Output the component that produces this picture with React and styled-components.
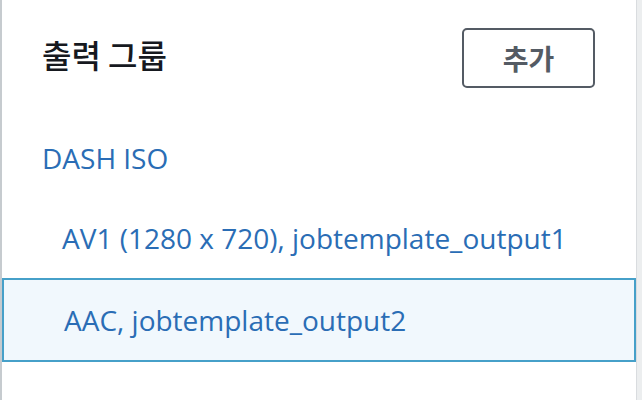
import React from "react";
import styled, { createGlobalStyle } from "styled-components";

const Global = createGlobalStyle`
  html, body { margin: 0; padding: 0; background: #ffffff; }
  body { font-family: "Open Sans", "Noto Sans CJK KR", sans-serif; }
`;

const Frame = styled.div`
  display: flex;
  width: 642px;
  height: 400px;
  overflow: hidden;
`;

const Panel = styled.section`
  flex: 1;
  border-left: 2px solid #c6cbcf;
  background: #ffffff;
  display: flex;
  flex-direction: column;
`;

const Edge = styled.div`
  width: 5px;
  border-left: 1px solid #d9dcdf;
  background: #eceeef;
`;

const Header = styled.header`
  height: 118px;
  box-sizing: border-box;
  padding: 28px 41px 0 40px;
  display: flex;
  justify-content: space-between;
  align-items: flex-start;
`;

const Title = styled.h2`
  margin: 0;
  padding-top: 4px;
  font-family: "Noto Sans CJK KR", sans-serif;
  font-weight: 500;
  font-size: 32px;
  line-height: 44px;
  color: #16191f;
`;

const AddButton = styled.button`
  width: 133px;
  height: 60px;
  box-sizing: border-box;
  border: 2px solid #545b64;
  border-radius: 5px;
  background: #ffffff;
  color: #545b64;
  font-family: "Noto Sans CJK KR", sans-serif;
  font-weight: 700;
  font-size: 28px;
  line-height: 1;
  padding: 0;
  cursor: pointer;
`;

const List = styled.ul`
  list-style: none;
  margin: 0;
  padding: 0;
`;

const Item = styled.li`
  height: 80px;
  display: flex;
  align-items: center;
  padding-left: ${(p) => (p.$level === 0 ? "40px" : "60px")};
  font-size: 28px;
  color: #2a6db5;
  white-space: nowrap;
  border: ${(p) => (p.$selected ? "2px solid #46a0c9" : "none")};
  background: ${(p) => (p.$selected ? "#f1f8fd" : "transparent")};
`;

const items = [
  { label: "DASH ISO", level: 0 },
  { label: "AV1 (1280 x 720), jobtemplate_output1", level: 1 },
  { label: "AAC, jobtemplate_output2", level: 1, selected: true },
];

export default function App() {
  return (
    <>
      <Global />
      <Frame>
        <Panel>
          <Header>
            <Title>출력 그룹</Title>
            <AddButton>추가</AddButton>
          </Header>
          <List>
            {items.map((it) => (
              <Item key={it.label} $level={it.level} $selected={it.selected}>
                {it.label}
              </Item>
            ))}
          </List>
        </Panel>
        <Edge />
      </Frame>
    </>
  );
}
